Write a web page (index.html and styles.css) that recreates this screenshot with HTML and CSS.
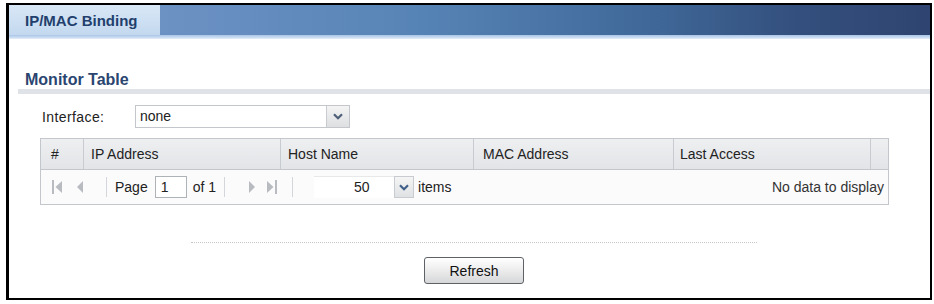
FILE: index.html
```html
<!DOCTYPE html>
<html>
<head>
<meta charset="utf-8">
<link rel="stylesheet" href="styles.css">
</head>
<body>
<div class="frame">
  <div class="tabbar">
    <div class="tab">IP/MAC Binding</div>
  </div>
  <div class="tabline"></div>
  <div class="content">
    <div class="section-title">Monitor Table</div>
    <div class="section-bar"></div>
    <div class="field-row">
      <span class="field-label">Interface:</span>
      <div class="select">
        <span class="select-value">none</span>
        <span class="select-btn"><svg width="10" height="7" viewBox="0 0 10 7"><path d="M1 1.2 L5 5.2 L9 1.2" fill="none" stroke="#4f5f78" stroke-width="2.2"/></svg></span>
      </div>
    </div>
    <div class="grid">
      <div class="grid-head">
        <div class="col c-num">#</div>
        <div class="col c-ip">IP Address</div>
        <div class="col c-host">Host Name</div>
        <div class="col c-mac">MAC Address</div>
        <div class="col c-last">Last Access</div>
        <div class="col c-fill"></div>
      </div>
      <div class="pager">
        <span class="pg-icon first"><svg width="10" height="14" viewBox="0 0 10 14"><rect x="0" y="0" width="2" height="14" fill="#b8bcc1"/><path d="M10 1 L3.5 7 L10 13 Z" fill="#b8bcc1"/></svg></span>
        <span class="pg-icon prev"><svg width="6" height="12" viewBox="0 0 6 12"><path d="M6 0 L0 6 L6 12 Z" fill="#b8bcc1"/></svg></span>
        <span class="pg-sep"></span>
        <span class="pg-text">Page</span>
        <span class="pg-input">1</span>
        <span class="pg-text">of 1</span>
        <span class="pg-sep sep2"></span>
        <span class="pg-icon next"><svg width="6" height="12" viewBox="0 0 6 12"><path d="M0 0 L6 6 L0 12 Z" fill="#b8bcc1"/></svg></span>
        <span class="pg-icon last"><svg width="10" height="14" viewBox="0 0 10 14"><path d="M0 1 L6.5 7 L0 13 Z" fill="#b8bcc1"/><rect x="8" y="0" width="2" height="14" fill="#b8bcc1"/></svg></span>
        <span class="pg-sep sep3"></span>
        <span class="pg-combo">
          <span class="pg-combo-value">50</span>
          <span class="pg-combo-btn"><svg width="10" height="7" viewBox="0 0 10 7"><path d="M1 1.2 L5 5.2 L9 1.2" fill="none" stroke="#3f5f8a" stroke-width="2.2"/></svg></span>
        </span>
        <span class="pg-text items">items</span>
        <span class="pg-empty">No data to display</span>
      </div>
    </div>
    <div class="divider"></div>
    <div class="actions">
      <button class="btn" type="button">Refresh</button>
    </div>
  </div>
</div>
</body>
</html>
```

FILE: styles.css
```css
html, body {
  margin: 0;
  padding: 0;
  background: #ffffff;
}

body {
  font-family: "Liberation Sans", Arial, sans-serif;
  font-size: 14px;
  color: #222222;
}

.frame {
  box-sizing: border-box;
  width: 926px;
  height: 297px;
  margin: 3px 0 0 6px;
  border: 2px solid #000000;
  border-left-width: 3px;
  background: #ffffff;
  overflow: hidden;
}

.tabbar {
  display: flex;
  height: 30px;
  background: linear-gradient(to right, #7398c9 0%, #6a90c2 20%, #5683b5 45%, #3f6898 70%, #34507e 85%, #2f4470 100%);
}

.tab {
  box-sizing: border-box;
  width: 151px;
  padding-left: 16px;
  display: flex;
  align-items: center;
  background: linear-gradient(#d9e7f6, #c3d8ef);
  font-weight: bold;
  font-size: 15px;
  color: #223f6d;
}

.tabline {
  height: 4px;
  background: linear-gradient(#a9c4e6, #c9dcf2 60%, #e6eff9);
}

.content {
  margin-left: 9px;
  display: flex;
  flex-direction: column;
}

.section-title {
  margin-top: 31px;
  padding-left: 7px;
  height: 19px;
  line-height: 19px;
  font-weight: bold;
  font-size: 16px;
  color: #2a4570;
}

.section-bar {
  height: 5px;
  background: #dfe2e6;
}

.field-row {
  margin-top: 11px;
  padding-left: 24px;
  display: flex;
  align-items: center;
  height: 23px;
}

.field-label {
  width: 93px;
  color: #222222;
  letter-spacing: 0.4px;
}

.select {
  box-sizing: border-box;
  width: 215px;
  height: 23px;
  display: flex;
  border: 1px solid #c3c6ca;
  background: #ffffff;
}

.select-value {
  flex: 1;
  padding-left: 4px;
  line-height: 21px;
}

.select-btn {
  width: 22px;
  border-left: 1px solid #c8cbcf;
  background: linear-gradient(#f4f4f4, #dddfe1);
  display: flex;
  align-items: center;
  justify-content: center;
}

.grid {
  margin-top: 10px;
  margin-left: 22px;
  width: 849px;
  display: flex;
  flex-direction: column;
}

.grid-head {
  box-sizing: border-box;
  height: 32px;
  display: flex;
  border: 1px solid #c3c7cc;
  background: linear-gradient(#eeeff1, #e2e4e7);
}

.col {
  box-sizing: border-box;
  border-right: 1px solid #c8cbcf;
  padding-left: 7px;
  line-height: 30px;
  color: #222222;
  white-space: nowrap;
}

.c-num { width: 43px; padding-left: 10px; }
.c-ip { width: 197px; }
.c-host { width: 193px; }
.c-mac { width: 200px; padding-left: 9px; }
.c-last { width: 197px; padding-left: 6px; }
.c-fill { flex: 1; border-right: none; }

.pager {
  box-sizing: border-box;
  height: 35px;
  display: flex;
  align-items: center;
  border: 1px solid #c3c7cc;
  border-top: none;
  background: #fbfbfc;
  padding-left: 11px;
  padding-right: 4px;
}

.pg-icon {
  display: flex;
  align-items: center;
}

.pg-icon.prev { margin-left: 15px; }
.pg-icon.next { margin-left: 24px; }
.pg-icon.last { margin-left: 12px; }

.pg-sep {
  width: 1px;
  height: 20px;
  background: #d3d6da;
  margin-left: 23px;
  margin-right: 8px;
}

.pg-sep.sep2 { margin-left: 8px; margin-right: 0; }
.pg-sep.sep3 { margin-left: 15px; margin-right: 0; }

.pg-text {
  color: #222222;
}

.pg-input {
  box-sizing: border-box;
  width: 32px;
  height: 22px;
  margin: 0 6px 0 7px;
  padding-left: 5px;
  border: 1px solid #aeb3b8;
  background: #ffffff;
  line-height: 20px;
}

.pg-combo {
  display: flex;
  height: 22px;
  margin-left: 21px;
}

.pg-combo-value {
  box-sizing: border-box;
  width: 80px;
  padding-left: 40px;
  border-top: 1px solid #e6e8ea;
  line-height: 21px;
  background: #ffffff;
}

.pg-combo-btn {
  box-sizing: border-box;
  width: 20px;
  border: 1px solid #c8ccd0;
  background: linear-gradient(#f5f5f5, #dfe1e3);
  display: flex;
  align-items: center;
  justify-content: center;
}

.pg-text.items {
  margin-left: 4px;
}

.pg-empty {
  margin-left: auto;
  color: #333333;
}

.divider {
  align-self: center;
  width: 566px;
  margin-top: 37px;
  height: 0;
  border-top: 1px dotted #c4c7cb;
}

.actions {
  display: flex;
  justify-content: center;
  margin-top: 14px;
}

.btn {
  box-sizing: border-box;
  width: 100px;
  height: 27px;
  border: 1px solid #5e6266;
  border-radius: 3px;
  background: linear-gradient(#ffffff, #ececec 50%, #d6d7d9);
  font-family: "Liberation Sans", Arial, sans-serif;
  font-size: 14px;
  color: #111111;
  padding: 0;
}
```
